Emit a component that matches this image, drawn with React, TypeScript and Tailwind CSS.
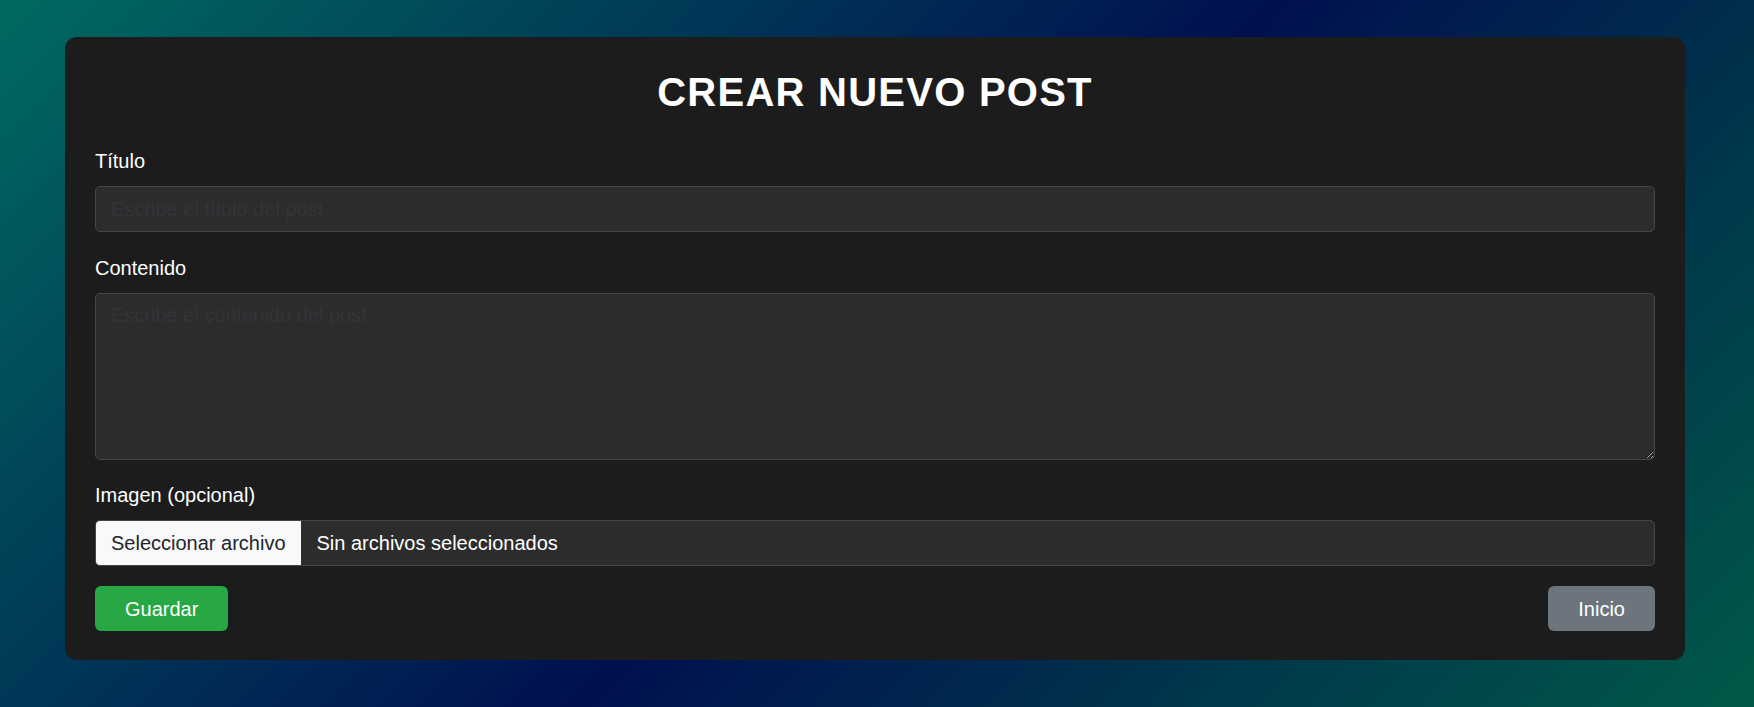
export default function App() {
    const label = "block text-[20px] leading-[23px] text-white mb-[13px]";
    const field =
        "block w-full rounded-[5px] border border-[#464646] bg-[#2c2c2c] px-[15px] text-[20px] text-white outline-none placeholder:text-[#313539]";

    return (
        <div className="min-h-screen bg-[linear-gradient(135deg,#006a60_0%,#00104f_52%,#005a48_100%)] pt-[37px] pl-[65px] pr-[69px] pb-[47px] font-['Liberation_Sans',Arial,sans-serif]">
            <div className="rounded-[12px] bg-[#1c1c1c] px-[30px] pt-[32px] pb-[29px]">
                <h1 className="mb-[35px] text-center text-[40px] leading-[46px] font-bold tracking-[1.25px] text-white">
                    CREAR NUEVO POST
                </h1>

                <div className="mb-[25px]">
                    <label htmlFor="titulo" className={label}>Título</label>
                    <input
                        id="titulo"
                        type="text"
                        placeholder="Escribe el título del post"
                        className={`${field} h-[46px]`}
                    />
                </div>

                <div className="mb-[24px]">
                    <label htmlFor="contenido" className={label}>Contenido</label>
                    <textarea
                        id="contenido"
                        placeholder="Escribe el contenido del post"
                        className={`${field} h-[167px] py-[10px] leading-[23px]`}
                    />
                </div>

                <div>
                    <span className={label}>Imagen (opcional)</span>
                    <div className="flex h-[46px] w-full items-center overflow-hidden rounded-[5px] border border-[#464646] bg-[#2c2c2c] text-[20px]">
                        <div className="flex h-full items-center bg-[#f8f9fa] px-[15px] text-[#212529]">
                            Seleccionar archivo
                        </div>
                        <span className="pl-[16px] text-white">Sin archivos seleccionados</span>
                    </div>
                </div>

                <div className="mt-[20px] flex items-center justify-between">
                    <button
                        type="submit"
                        className="h-[45px] rounded-[6px] bg-[#28a745] px-[30px] text-[20px] text-white"
                    >
                        Guardar
                    </button>
                    <button
                        type="button"
                        className="h-[45px] rounded-[6px] bg-[#6c757d] px-[30px] text-[20px] text-white"
                    >
                        Inicio
                    </button>
                </div>
            </div>
        </div>
    );
}
